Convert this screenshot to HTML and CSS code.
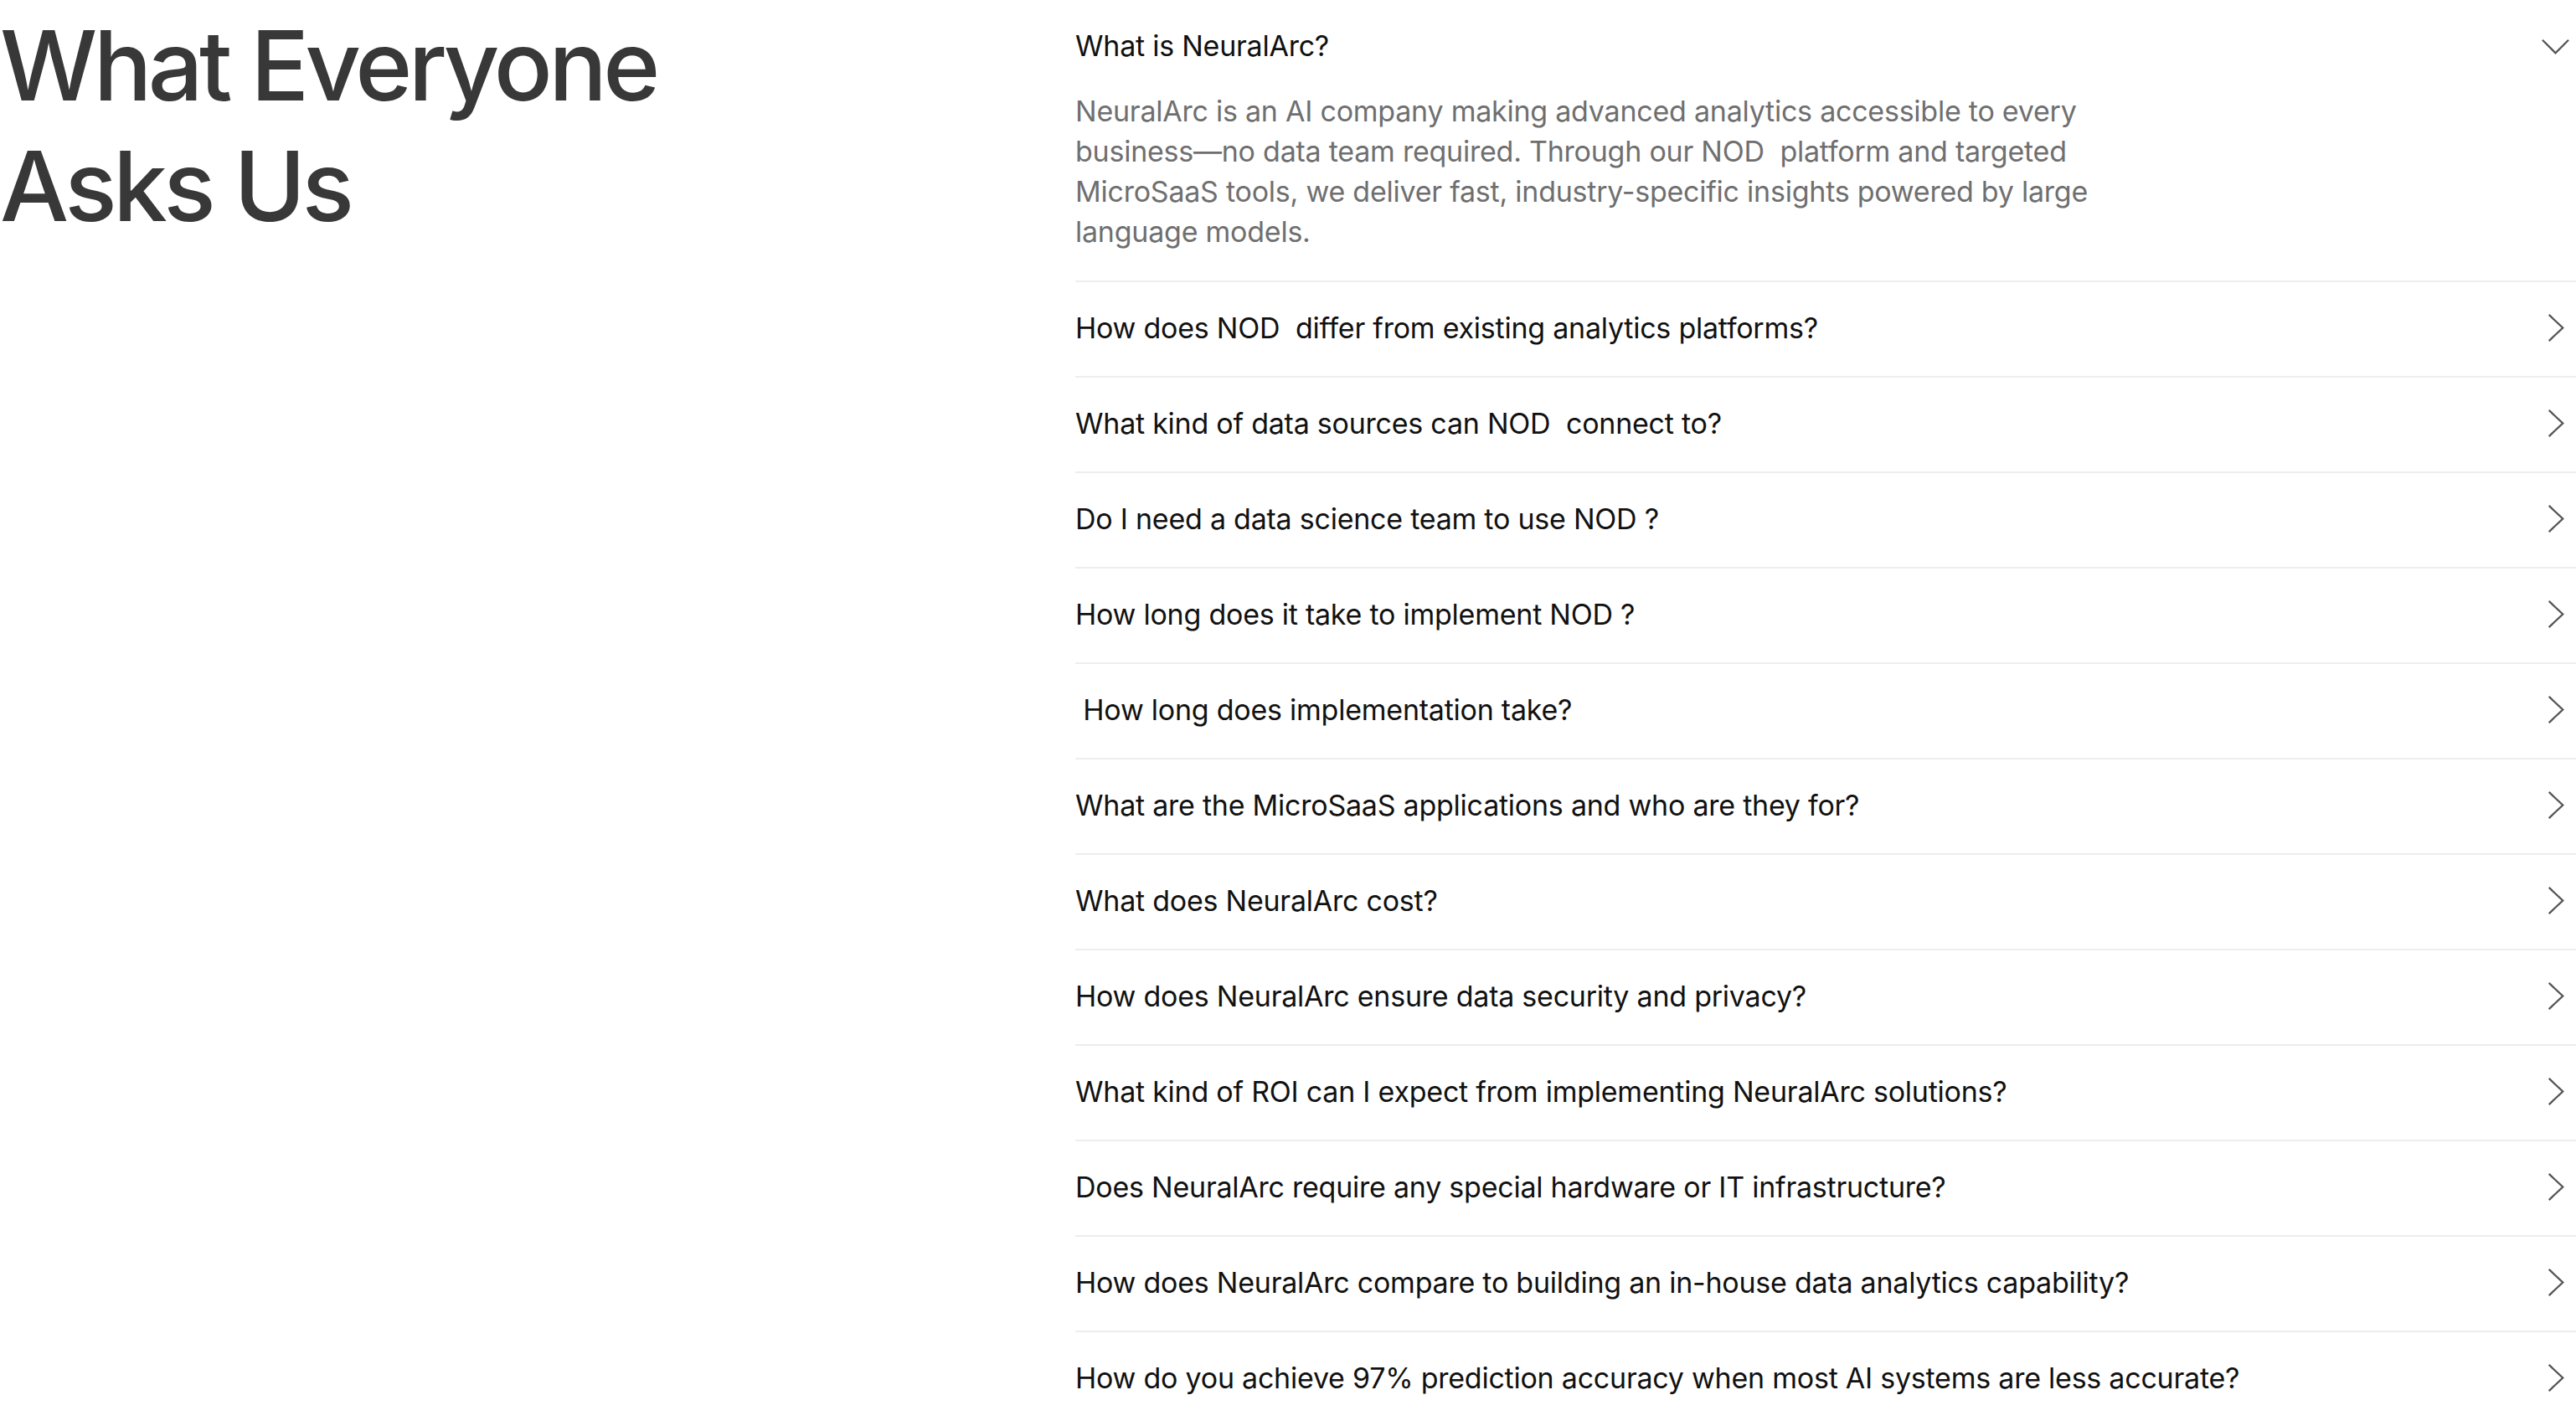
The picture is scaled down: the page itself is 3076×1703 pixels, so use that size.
FILE: index.html
```html
<!DOCTYPE html>
<html lang="en">
<head>
<meta charset="utf-8">
<title>FAQ</title>
<link rel="stylesheet" href="styles.css">
</head>
<body>
<section class="faq">
  <div class="faq-intro">
    <h2 class="faq-title">What Everyone<br>Asks Us</h2>
  </div>
  <div class="faq-list">
    <div class="faq-item open">
      <div class="faq-q">
        <span class="q-text">What is NeuralArc?</span>
        <svg class="chev" viewBox="0 0 34 34" aria-hidden="true"><path d="M1 10 L17 26 L33 10"/></svg>
      </div>
      <p class="faq-a">NeuralArc is an AI company making advanced analytics accessible to every business—no data team required. Through our NOD&nbsp; platform and targeted MicroSaaS tools, we deliver fast, industry-specific insights powered by large language models.</p>
    </div>
    <div class="faq-item">
      <div class="faq-q"><span class="q-text">How does NOD&nbsp; differ from existing analytics platforms?</span>
        <svg class="chev" viewBox="0 0 34 34" aria-hidden="true"><path d="M9 1 L26 17 L9 33"/></svg></div>
    </div>
    <div class="faq-item">
      <div class="faq-q"><span class="q-text">What kind of data sources can NOD&nbsp; connect to?</span>
        <svg class="chev" viewBox="0 0 34 34" aria-hidden="true"><path d="M9 1 L26 17 L9 33"/></svg></div>
    </div>
    <div class="faq-item">
      <div class="faq-q"><span class="q-text">Do I need a data science team to use NOD ?</span>
        <svg class="chev" viewBox="0 0 34 34" aria-hidden="true"><path d="M9 1 L26 17 L9 33"/></svg></div>
    </div>
    <div class="faq-item">
      <div class="faq-q"><span class="q-text">How long does it take to implement NOD ?</span>
        <svg class="chev" viewBox="0 0 34 34" aria-hidden="true"><path d="M9 1 L26 17 L9 33"/></svg></div>
    </div>
    <div class="faq-item">
      <div class="faq-q"><span class="q-text">&nbsp;How long does implementation take?</span>
        <svg class="chev" viewBox="0 0 34 34" aria-hidden="true"><path d="M9 1 L26 17 L9 33"/></svg></div>
    </div>
    <div class="faq-item">
      <div class="faq-q"><span class="q-text">What are the MicroSaaS applications and who are they for?</span>
        <svg class="chev" viewBox="0 0 34 34" aria-hidden="true"><path d="M9 1 L26 17 L9 33"/></svg></div>
    </div>
    <div class="faq-item">
      <div class="faq-q"><span class="q-text">What does NeuralArc cost?</span>
        <svg class="chev" viewBox="0 0 34 34" aria-hidden="true"><path d="M9 1 L26 17 L9 33"/></svg></div>
    </div>
    <div class="faq-item">
      <div class="faq-q"><span class="q-text">How does NeuralArc ensure data security and privacy?</span>
        <svg class="chev" viewBox="0 0 34 34" aria-hidden="true"><path d="M9 1 L26 17 L9 33"/></svg></div>
    </div>
    <div class="faq-item">
      <div class="faq-q"><span class="q-text">What kind of ROI can I expect from implementing NeuralArc solutions?</span>
        <svg class="chev" viewBox="0 0 34 34" aria-hidden="true"><path d="M9 1 L26 17 L9 33"/></svg></div>
    </div>
    <div class="faq-item">
      <div class="faq-q"><span class="q-text">Does NeuralArc require any special hardware or IT infrastructure?</span>
        <svg class="chev" viewBox="0 0 34 34" aria-hidden="true"><path d="M9 1 L26 17 L9 33"/></svg></div>
    </div>
    <div class="faq-item">
      <div class="faq-q"><span class="q-text">How does NeuralArc compare to building an in-house data analytics capability?</span>
        <svg class="chev" viewBox="0 0 34 34" aria-hidden="true"><path d="M9 1 L26 17 L9 33"/></svg></div>
    </div>
    <div class="faq-item">
      <div class="faq-q"><span class="q-text">How do you achieve 97% prediction accuracy when most AI systems are less accurate?</span>
        <svg class="chev" viewBox="0 0 34 34" aria-hidden="true"><path d="M9 1 L26 17 L9 33"/></svg></div>
    </div>
  </div>
</section>
</body>
</html>
```
FILE: styles.css
```css
html, body {
  margin: 0;
  padding: 0;
  background: #ffffff;
}
body {
  font-family: Inter, "Noto Sans", sans-serif;
  color: #111111;
}
.faq {
  display: grid;
  grid-template-columns: 1284px 1fr;
}
.faq-intro {
  padding-top: 6px;
}
.faq-title {
  margin: 0;
  font-size: 116px;
  line-height: 144px;
  font-weight: 500;
  letter-spacing: -0.04em;
  color: #383838;
}
.faq-list {
  display: flex;
  flex-direction: column;
}
.faq-item {
  border-bottom: 2px solid #ededed;
}
.faq-q {
  box-sizing: border-box;
  height: 112px;
  display: flex;
  align-items: center;
  justify-content: space-between;
  padding-right: 8px;
  padding-bottom: 4px;
}
.q-text {
  font-size: 34px;
  letter-spacing: -0.007em;
  color: #111111;
  white-space: nowrap;
}
.chev {
  width: 33px;
  height: 33px;
  flex: none;
  fill: none;
  stroke: #555555;
  stroke-width: 2.4;
}
.faq-a {
  margin: -3px 0 0;
  padding-bottom: 34px;
  max-width: 1260px;
  font-size: 34px;
  line-height: 48px;
  letter-spacing: -0.007em;
  color: #6f6f6f;
}
```
